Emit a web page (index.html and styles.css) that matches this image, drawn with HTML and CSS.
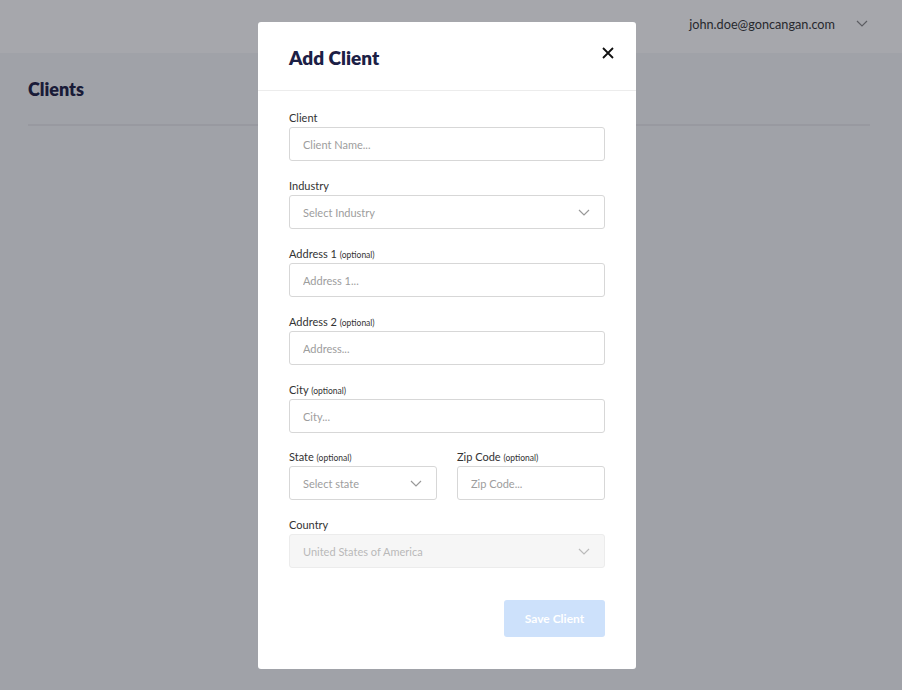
FILE: index.html
```html
<!DOCTYPE html>
<html lang="en">
<head>
    <meta charset="UTF-8">
    <meta name="viewport" content="width=device-width, initial-scale=1.0">
    <title>Clients</title>
    <link rel="stylesheet" href="styles.css">
</head>
<body>

    <div class="topbar">
        <span class="user-email">john.doe@goncangan.com</span>
        <svg class="chevron user-chevron" width="12" height="7" viewBox="0 0 12 7"><path d="M1 1l5 5 5-5" fill="none" stroke="#888" stroke-width="1.2"/></svg>
    </div>

    <div class="page">
        <h1 class="page-title">Clients</h1>
        <div class="page-rule"></div>
    </div>

    <div class="overlay"></div>

    <div class="modal">
        <div class="modal-header">
            <h2 class="modal-title">Add Client</h2>
            <button class="close-btn" aria-label="Close">
                <svg width="12" height="12" viewBox="0 0 12 12"><path d="M1 1l10 10M11 1L1 11" stroke="#111" stroke-width="1.8" fill="none"/></svg>
            </button>
        </div>

        <form class="modal-body">
            <div class="field">
                <label for="client">Client</label>
                <input type="text" id="client" placeholder="Client Name...">
            </div>

            <div class="field">
                <label>Industry</label>
                <div class="select">
                    <span>Select Industry</span>
                    <svg class="chevron" width="12" height="7" viewBox="0 0 12 7"><path d="M1 1l5 5 5-5" fill="none" stroke="#999" stroke-width="1.2"/></svg>
                </div>
            </div>

            <div class="field">
                <label for="addr1">Address 1 <small>(optional)</small></label>
                <input type="text" id="addr1" placeholder="Address 1...">
            </div>

            <div class="field">
                <label for="addr2">Address 2 <small>(optional)</small></label>
                <input type="text" id="addr2" placeholder="Address...">
            </div>

            <div class="field">
                <label for="city">City <small>(optional)</small></label>
                <input type="text" id="city" placeholder="City...">
            </div>

            <div class="field-row">
                <div class="field">
                    <label>State <small>(optional)</small></label>
                    <div class="select">
                        <span>Select state</span>
                        <svg class="chevron" width="12" height="7" viewBox="0 0 12 7"><path d="M1 1l5 5 5-5" fill="none" stroke="#999" stroke-width="1.2"/></svg>
                    </div>
                </div>
                <div class="field">
                    <label for="zip">Zip Code <small>(optional)</small></label>
                    <input type="text" id="zip" placeholder="Zip Code...">
                </div>
            </div>

            <div class="field">
                <label>Country</label>
                <div class="select disabled">
                    <span>United States of America</span>
                    <svg class="chevron" width="12" height="7" viewBox="0 0 12 7"><path d="M1 1l5 5 5-5" fill="none" stroke="#bbb" stroke-width="1.2"/></svg>
                </div>
            </div>

            <div class="actions">
                <button type="button" class="save-btn">Save Client</button>
            </div>
        </form>
    </div>

</body>
</html>
```

FILE: styles.css
```css
body {
    font-family: 'Lato', 'Noto Sans', sans-serif;
    background-color: #f6f7f9;
    margin: 0;
    height: 100vh;
    overflow: hidden;
}

.topbar {
    height: 53px;
    background-color: white;
    display: flex;
    align-items: center;
    justify-content: flex-end;
    padding-right: 34px;
    padding-bottom: 6px;
    box-sizing: border-box;
}

.user-email {
    font-size: 12.7px;
    color: #333;
    margin-right: 21px;
}

.page {
    padding: 0 32px 0 28px;
}

.page-title {
    font-size: 18px;
    font-weight: 800;
    color: #1c2045;
    margin: 25px 0 0;
    height: 20px;
}

.page-rule {
    height: 2px;
    background-color: #e8e9ec;
    margin-top: 26px;
}

.overlay {
    position: fixed;
    inset: 0;
    background-color: rgba(22, 24, 36, 0.38);
}

.modal {
    position: fixed;
    top: 22px;
    left: 258px;
    width: 378px;
    height: 647px;
    background-color: white;
    border-radius: 3px;
    box-sizing: border-box;
}

.modal-header {
    height: 69px;
    border-bottom: 1px solid #ececec;
    display: flex;
    align-items: center;
    justify-content: space-between;
    padding: 0 22px 0 31px;
    box-sizing: border-box;
}

.modal-title {
    font-size: 19px;
    font-weight: 800;
    color: #1c2045;
    margin: 3px 0 0;
}

.close-btn {
    background: none;
    border: none;
    padding: 0;
    cursor: pointer;
    margin-bottom: 6px;
    display: flex;
}

.modal-body {
    padding: 21px 31px 0;
    display: flex;
    flex-direction: column;
}

.field {
    display: flex;
    flex-direction: column;
    margin-bottom: 19px;
    min-width: 0;
}

.field label {
    display: block;
    height: 12px;
    font-size: 11px;
    line-height: 12px;
    color: #333;
    margin-bottom: 3px;
    white-space: nowrap;
}

.field label small {
    font-size: 8.5px;
    line-height: 1;
}

.field input, .select {
    width: 100%;
    height: 34px;
    border: 1px solid #d7d7d7;
    border-radius: 3px;
    padding: 0 13px;
    font-family: inherit;
    font-size: 11px;
    color: #333;
    box-sizing: border-box;
}

.field input::placeholder {
    color: #9d9d9d;
}

.select {
    display: flex;
    align-items: center;
    justify-content: space-between;
    color: #9d9d9d;
    padding-right: 14px;
}

.select.disabled {
    background-color: #f6f6f6;
    border-color: #ececec;
    color: #b9b9b9;
}

.field-row {
    display: grid;
    grid-template-columns: minmax(0, 1fr) minmax(0, 1fr);
    column-gap: 20px;
    margin-top: -1px;
}

.actions {
    display: flex;
    justify-content: flex-end;
    margin-top: 13px;
}

.save-btn {
    width: 101px;
    height: 37px;
    background-color: #cde1fb;
    color: white;
    border: none;
    border-radius: 3px;
    font-family: inherit;
    font-size: 12px;
    font-weight: 700;
    cursor: pointer;
}
```
